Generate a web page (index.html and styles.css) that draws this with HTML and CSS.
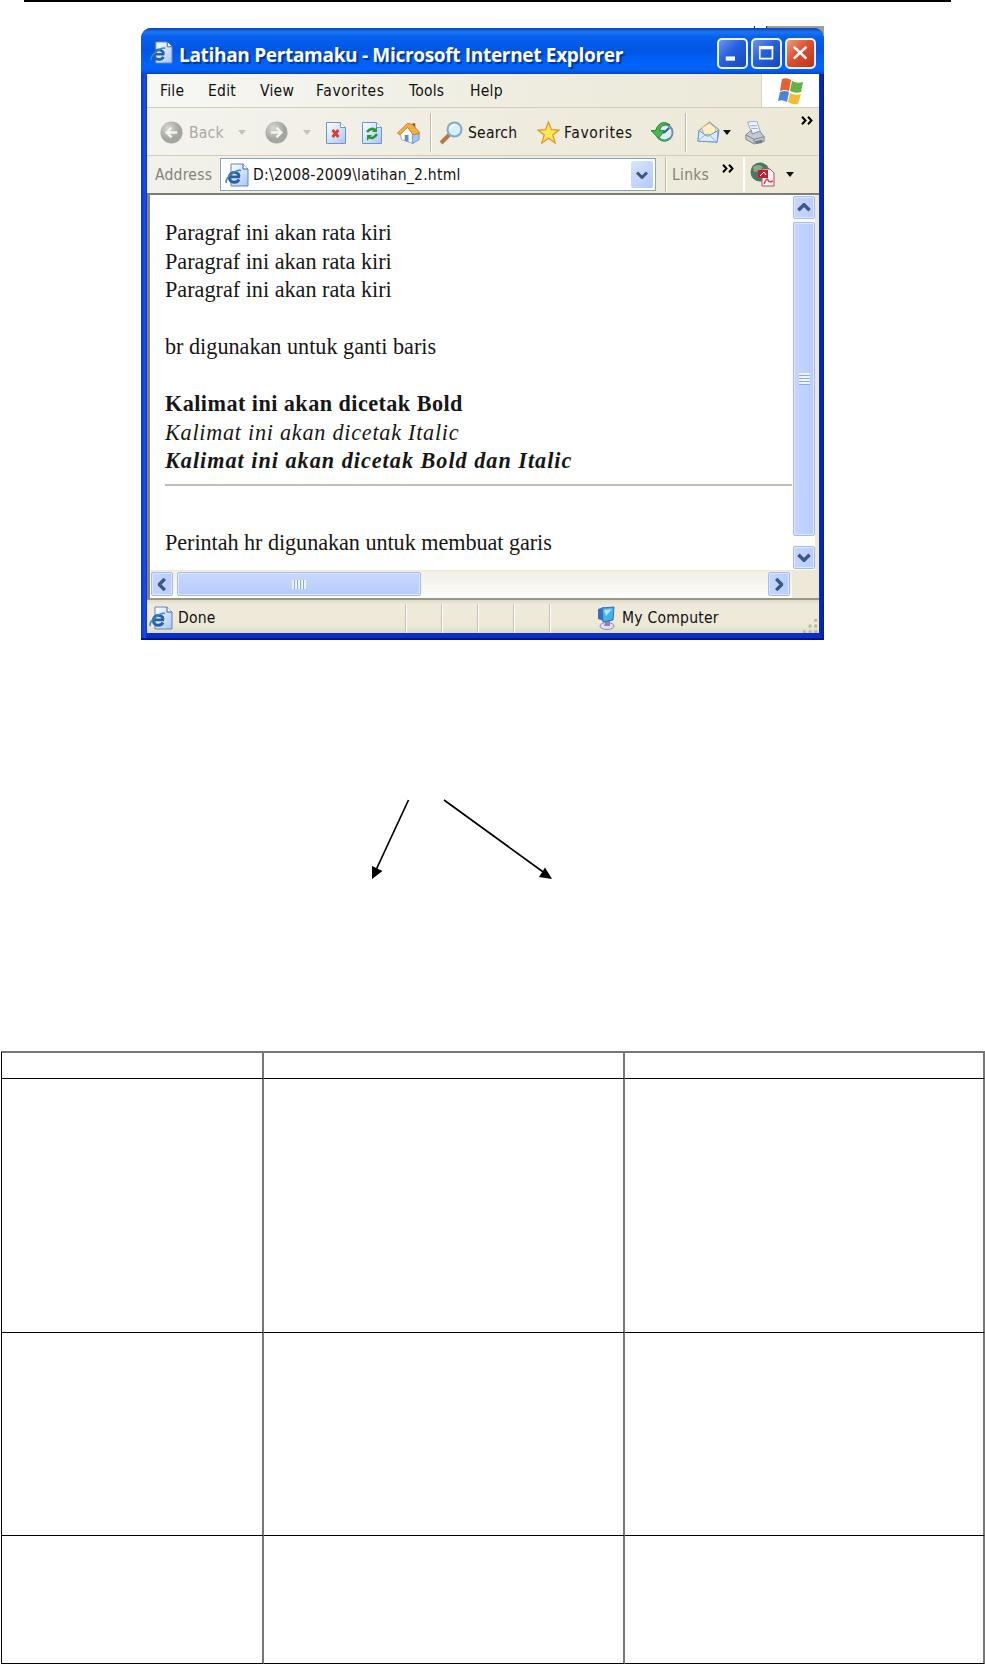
FILE: index.html
```
<!DOCTYPE html>
<html lang="id">
<head>
<meta charset="utf-8">
<title>Latihan Pertamaku</title>
<link rel="stylesheet" href="styles.css">
</head>
<body>
<svg width="0" height="0" class="defs">
  <defs>
    <linearGradient id="sheet" x2="1" y2="1"><stop offset="0" stop-color="#fff"/><stop offset="1" stop-color="#a9c5f5"/></linearGradient>
    <radialGradient id="disc" cx=".35" cy=".3"><stop offset="0" stop-color="#d8d8d2"/><stop offset="1" stop-color="#a6a6a1"/></radialGradient>
    <symbol id="page-e" viewBox="0 0 24 24">
      <path d="M6 1h12l5 5v17H6z" fill="url(#sheet)" stroke="#6384b8"/>
      <path d="M18 1v5h5" fill="#fff" stroke="#405f96"/>
      <path d="M14 16.500c-2 4-8.500 3.500-9.500-.5C3.500 11 8 8 12 10c1.800 1 2.300 2 1.800 3.800H5" fill="none" stroke="#2660a8" stroke-width="2.800"/>
      <path d="M1.500 20C-1 16 11 6 16 7.500" fill="none" stroke="#3f83c9" stroke-width="1.600"/>
    </symbol>
    <symbol id="chev" viewBox="0 0 12 8"><path d="M1 1.500l5 5 5-5" fill="none" stroke="#3d567f" stroke-width="3"/></symbol>
    <symbol id="more" viewBox="0 0 12 9"><path d="M1 .8l3.500 3.700L1 8.200M7 .8l3.500 3.700L7 8.200" fill="none" stroke="#000" stroke-width="2"/></symbol>
    <symbol id="caret" viewBox="0 0 8 5"><path d="M0 0h8L4 5z" fill="currentColor"/></symbol>
  </defs>
</svg>
<div class="head-rule"></div>
<div class="backdrop"><i></i><i></i><b></b></div>
<main class="window">
  <header class="title">
    <svg class="t-icon" viewBox="0 0 24 24"><use href="#page-e"/></svg>
    <h1>Latihan Pertamaku - Microsoft Internet Explorer</h1>
    <div class="controls">
      <span class="ctl"><svg viewBox="0 0 32 32"><path d="M8 22h11" stroke="#fff" stroke-width="5"/></svg></span>
      <span class="ctl"><svg viewBox="0 0 32 32"><path d="M8 9h15v13H8z" fill="none" stroke="#fff" stroke-width="2"/><path d="M7 9h17" stroke="#fff" stroke-width="4"/></svg></span>
      <span class="ctl close"><svg viewBox="0 0 32 32"><path d="M8 8l15 14M23 8L8 22" stroke="#fff" stroke-width="3"/></svg></span>
    </div>
  </header>
  <nav class="menu">
    <span>File</span><span>Edit</span><span>View</span><span class="fav">Favorites</span><span>Tools</span><span>Help</span>
    <div class="flag"><svg viewBox="0 0 28 28">
      <path d="M5 2q5-2 9 1l-2 11q-5-2-9 0z" fill="#e4602e"/><path d="M15 4q5 3 11 1l-2 10q-5 2-11-1z" fill="#62b345"/>
      <path d="M3 15q5-2 9 0l-2 10q-5-3-9-1z" fill="#4a86d6"/><path d="M13 16q5 3 11 1l-3 10q-5 1-10-2z" fill="#f2bd35"/></svg></div>
  </nav>
  <div class="tools">
    <svg class="disc" viewBox="0 0 24 24"><circle cx="12" cy="12" r="11.500" fill="url(#disc)"/><path d="M18 12H7m5-5l-5 5 5 5" fill="none" stroke="#f5f4ee" stroke-width="2.600"/></svg>
    <span class="dim">Back</span>
    <svg class="caret dim"><use href="#caret"/></svg>
    <svg class="disc" viewBox="0 0 24 24"><circle cx="12" cy="12" r="11.500" fill="url(#disc)"/><path d="M6 12h11m-5-5l5 5-5 5" fill="none" stroke="#f5f4ee" stroke-width="2.600"/></svg>
    <svg class="caret dim"><use href="#caret"/></svg>
    <svg class="sheet" viewBox="0 0 20 22"><path d="M.5.500h14l5 5v16H.5z" fill="url(#sheet)" stroke="#6e94d0"/><path d="M14.500.500v5h5" fill="#fff" stroke="#6e94d0"/><path d="M6.500 8l6 7M12.500 8l-6 7" stroke="#e0392a" stroke-width="2.700"/></svg>
    <svg class="sheet" viewBox="0 0 20 22"><path d="M.5.500h14l5 5v16H.5z" fill="url(#sheet)" stroke="#6e94d0"/><path d="M14.500.500v5h5" fill="#fff" stroke="#6e94d0"/><path d="M5 10q4-5 8-2M15 12q-4 6-8 3" fill="none" stroke="#229a35" stroke-width="2.500"/><path d="M10 10h5V5zM10 13H5v6z" fill="#229a35"/></svg>
    <svg class="home" viewBox="0 0 25 24"><path d="M16 2h3v6h-3z" fill="#7a4a34"/><path d="M3 13l8-9 6 8v11L5 19z" fill="#fffdf5" stroke="#8fa5cc"/><path d="M16 12l7 1v6l-7 4z" fill="#a6c4f3" stroke="#7596cc"/><path d="M.5 12L11 2l5 1 8 9-7 2-6-8-8 8z" fill="#f5ae42" stroke="#c67c26"/><path d="M8 14h4v7l-4-1z" fill="#5b8ed9"/></svg>
    <i class="sep"></i>
    <svg class="glass" viewBox="0 0 24 24"><path d="M10 14L2 22" stroke="#b37a48" stroke-width="4"/><circle cx="15.500" cy="8.500" r="7" fill="#d4f0fc" stroke="#83a8d2" stroke-width="2"/><path d="M11 8q1-4 5-4" fill="none" stroke="#fff" stroke-width="2"/></svg>
    <span class="search">Search</span>
    <svg class="star" viewBox="0 0 24 24"><path d="M12 1l3 8 8 .5-6.500 5L19 23l-7-5-7 5 2.500-8.500L1 9.500 9 9z" fill="#ffe552" stroke="#d89a2e" stroke-width="1.300"/></svg>
    <span class="fav">Favorites</span>
    <svg class="hist" viewBox="0 0 24 24"><circle cx="14" cy="12" r="8.500" fill="#d9edf6" stroke="#718aa6" stroke-width="2"/><path d="M14 12l5-5M14 12h-4" stroke="#315d91" stroke-width="2"/><path d="M20 4Q11-2 6 7l-1 3H0l8 8 6-8H9q1-7 11-6z" fill="#4fb64d" stroke="#23823a"/><path d="M8 18q6 5 12 0" fill="none" stroke="#469d57" stroke-width="2"/></svg>
    <i class="sep"></i>
    <svg class="mail" viewBox="0 0 24 24"><path d="M2 10L13 1l10 8-2 13L1 21z" fill="#cce4fa" stroke="#6594ca"/><path d="M5 7l8-5 7 6-2 6H7z" fill="#fff0c4" stroke="#e2a458"/><path d="M2 10l9 6 11-6-1 12L1 21z" fill="#d9edff" stroke="#6594ca"/><path d="M1 21l8-7 4 1 8 7" fill="none" stroke="#8db3dd"/></svg>
    <svg class="caret"><use href="#caret"/></svg>
    <svg class="printer" viewBox="0 0 24 26"><path d="M4 1l10-1 4 12-9 3z" fill="#edf4ff" stroke="#91a3c4"/><path d="M7 5h7M8 8h7" stroke="#91a3c4"/><path d="M2 15l6-5 1 4 8-3 5 6v5l-11 3-9-5z" fill="#c3c8d2" stroke="#7e8694"/><path d="M2 15l9 5 11-3M11 20v4" fill="none" stroke="#777f8e"/><path d="M12 22l8-2v4l-7 1z" fill="#777e88"/></svg>
    <svg class="more"><use href="#more"/></svg>
  </div>
  <div class="address">
    <span class="a-label">Address</span>
    <div class="field">
      <svg class="a-icon"><use href="#page-e"/></svg>
      <span>D:\2008-2009\latihan_2.html</span>
      <b class="drop"><svg width="12" height="8"><use href="#chev"/></svg></b>
    </div>
    <i class="sep"></i>
    <span class="links">Links</span>
    <svg class="more"><use href="#more"/></svg>
    <i class="sep light"></i>
    <svg class="globe" viewBox="0 0 25 25"><circle cx="10" cy="10" r="9.500" fill="#4e7464"/><path d="M3 5q5-4 10 0l-3 4-6 1zM11 10l7-2-3 7z" fill="#8faa87"/><path d="M12 7h8l4 4v13H12z" fill="#fbf2f4" stroke="#b14b60"/><path d="M8 8h10v8H8z" fill="#bd2033"/><path d="M14 22q3-7 4-4t5 1" fill="none" stroke="#c94558" stroke-width="1.500"/><path d="M10 14l4-4 2 3" fill="none" stroke="#fff"/></svg>
    <svg class="caret"><use href="#caret"/></svg>
  </div>
  <section class="view">
    <article class="doc">
      <p>Paragraf ini akan rata kiri</p>
      <p>Paragraf ini akan rata kiri</p>
      <p>Paragraf ini akan rata kiri</p>
      <p class="gap">br digunakan untuk ganti baris</p>
      <p class="gap bold">Kalimat ini akan dicetak Bold</p>
      <p class="ital">Kalimat ini akan dicetak Italic</p>
      <p class="bi">Kalimat ini akan dicetak Bold dan Italic</p>
      <hr>
      <p class="last">Perintah hr digunakan untuk membuat garis</p>
    </article>
    <div class="vbar">
      <b class="btn"><svg class="up" width="14" height="9"><use href="#chev"/></svg></b>
      <b class="thumb"><i class="grip"></i></b>
      <b class="btn"><svg width="14" height="9"><use href="#chev"/></svg></b>
    </div>
    <div class="hbar">
      <b class="btn"><svg class="left" width="14" height="9"><use href="#chev"/></svg></b>
      <b class="thumb"><i class="grip"></i></b>
      <b class="btn end"><svg class="right" width="14" height="9"><use href="#chev"/></svg></b>
    </div>
    <div class="corner"></div>
  </section>
  <footer class="status">
    <div class="done"><svg class="a-icon"><use href="#page-e"/></svg><span>Done</span></div>
    <i></i><i></i><i></i><i></i><i></i>
    <div class="zone"><svg viewBox="0 0 18 24" width="18" height="24"><ellipse cx="10" cy="20" rx="7" ry="3.500" fill="#e6dff2" stroke="#9b83b8"/><path d="M9 14h4v6H7z" fill="#8b84bd"/><path d="M1 3l6-2v14l-6-2z" fill="#3870b8"/><path d="M5 2l12-1-1 13-10 2z" fill="#44b4ea" stroke="#346fae"/><path d="M7 4l8-1-6 7z" fill="#a4e8fc"/></svg><span>My Computer</span></div>
    <svg class="resize" viewBox="0 0 16 16"><path d="M12 1h3v3h-3zM12 7h3v3h-3zM12 13h3v3h-3zM6 7h3v3H6zM6 13h3v3H6zM0 13h3v3H0z" fill="#bdb69f"/></svg>
  </footer>
</main>
<svg class="arrows" width="220" height="120" viewBox="0 0 220 120">
  <path d="M58.500 20L26 90M94 20l102 74" stroke="#000" stroke-width="1.700"/>
  <path d="M22 99V86l10.500 5zM202 99l-13-2 6-9.500z"/>
</svg>
<div class="grid">
  <div></div><div></div><div></div>
  <div></div><div></div><div></div>
  <div></div><div></div><div></div>
  <div></div><div></div><div></div>
</div>
</body>
</html>
```
FILE: styles.css
```
* { box-sizing: border-box; }
body { margin: 0; width: 985px; height: 1664px; background: #fff; overflow: hidden; display: flex; flex-direction: column; }
.defs { position: absolute; }
svg { display: block; flex: none; }
p, h1 { margin: 0; white-space: nowrap; }
span { white-space: nowrap; }
.head-rule { flex: none; margin-left: 24px; width: 927px; height: 2px; background: #000; }
.backdrop { flex: none; height: 8px; margin: 24px 0 -6px 754px; width: 70px; display: flex; gap: 11px; }
.backdrop i { width: 1px; background: #222; }
.backdrop b { flex: 1; background: #a39d94; margin-left: -11px; }

.window { flex: none; position: relative; margin-left: 141px; width: 683px; height: 612px; display: flex; flex-direction: column; padding: 0 4px 5px 6px; background: linear-gradient(90deg, #0831d9, #1b50e4 4px, #0a2fc5 6px, #0a2fc5 678px, #001ea0); border-bottom: 2px solid #00138c; border-radius: 10px 10px 0 0; font: 15.500px "DejaVu Sans Condensed", "DejaVu Sans", sans-serif; font-stretch: condensed; letter-spacing: .25px; color: #111; }
.title { flex: none; height: 46px; margin: 0 -4px 0 -6px; padding: 8px 8px 0 9px; display: flex; align-items: center; border-radius: 10px 10px 0 0; background: linear-gradient(#0743b5, #1974f5 4px, #0860ee 9px, #0055e5 22px, #0263fa 36px, #0261f5 42px, #0646bd); }
.t-icon { width: 23px; height: 23px; margin-right: 6px; margin-top: -6px; }
.title h1 { font: bold 19px "Open Sans", sans-serif; letter-spacing: -.31px; color: #fff; text-shadow: 2px 2px 1px #06368f; margin-top: -1px; }
.controls { margin-left: auto; display: flex; gap: 3px; margin-top: -3px; }
.ctl { width: 31px; height: 31px; border: 2px solid #eef4ff; border-radius: 5px; background: linear-gradient(135deg, #6d94f0, #2460de 45%, #1549bd); }
.ctl svg { width: 27px; height: 27px; }
.close { background: linear-gradient(135deg, #f09a7d, #dd5030 45%, #b8351a); }

.menu { flex: none; height: 34px; margin-right: 1px; background: linear-gradient(90deg, #f7f7f5, #eeecdf 60%, #ece9d8); border-bottom: 1px solid #d2cdbb; display: grid; grid-template-columns: 48px 52px 56px 93px 61px 1fr 58px; padding-left: 13px; align-items: center; }
.fav { letter-spacing: .65px; }
.flag { height: 33px; background: #fff; display: grid; place-items: center; border-left: 1px solid #d8d4c3; }
.flag svg { width: 28px; height: 28px; }

.tools { flex: none; height: 48px; margin-right: 1px; background: linear-gradient(90deg, #f4f3ee, #efecdf 55%, #ece9d8); border-bottom: 1px solid #d2cdbb; display: grid; align-items: center; padding: 2px 0 0 13px; grid-template-columns: 29px 49px 27px 38px 23px 36px 35px 33px 9px 29px 69px 27px 87px 34px 12px 26px 21px 57px 14px; }
.disc { width: 23px; height: 23px; }
.dim { color: #aaa9a3; }
.caret { width: 8px; height: 5px; }
.tools .dim.caret { color: #c4c2b9; }
.sheet { width: 20px; height: 22px; }
.home, .glass { width: 24px; height: 24px; }
.star, .hist, .mail { width: 23px; height: 23px; }
.printer { width: 22px; height: 24px; }
.more { width: 12px; height: 9px; margin-bottom: 25px; }
.sep { width: 1px; height: 39px; background: #bdb9aa; box-shadow: 1px 0 #fff; }

.address { flex: none; height: 39px; margin-right: 1px; background: linear-gradient(90deg, #f2f1ea, #ece9d8); display: grid; align-items: center; padding-left: 8px; grid-template-columns: 65px 436px 9px 8px 48px 23px 6px 37px 10px; border-bottom: 2px solid #7e7c74; }
.a-label, .links { color: #85837a; }
.field { height: 33px; background: #fff; border: 1px solid #8ba4bd; display: flex; align-items: center; padding: 0 2px 0 4px; }
.a-icon { width: 24px; height: 24px; margin-right: 4px; }
.field .drop { margin-left: auto; width: 22px; height: 27px; display: grid; place-items: center; background: linear-gradient(135deg, #d8e4ff, #b3c9f8); border-radius: 2px; }
.address .sep { grid-column: 3; height: 35px; margin-left: 9px; }
.address .links { grid-column: 4 / 6; margin-left: 7px; }
.address .more { grid-column: 6; margin: 0 0 13px 1px; }
.address .light { grid-column: 7; margin-left: -1px; background: #fff; }
.globe { width: 25px; height: 25px; }
.address .caret { margin-left: -1px; }

.view { flex: none; height: 405px; margin-right: 1px; display: grid; grid-template: 375px 28px / 642px 27px; background: #fff; border-left: 3px solid #85837c; border-bottom: 2px solid #9a978a; }
.doc { padding: 24px 0 0 15px; font: 22.200px/28.500px "Liberation Serif", serif; letter-spacing: 0; color: #161616; overflow: hidden; }
.gap { padding-top: 28.500px; }
.bold, .bi { font-weight: bold; }
.ital, .bi { font-style: italic; }
.bold { letter-spacing: .45px; }
.ital { letter-spacing: .75px; }
.bi { letter-spacing: 1px; }
.doc hr { margin: 8px 0 0; border: 0; height: 2px; background: #c0bdb2; }
.last { padding-top: 43px; letter-spacing: -.05px; }
.vbar { border-right: 4px solid #ece9d8; padding: 1px 0 1px 1px; display: flex; flex-direction: column; background: #fcfcf8; }
.btn, .thumb { flex: none; display: grid; place-items: center; background: linear-gradient(90deg, #c4d6ff, #bacdfb); border: 1px solid #a5bbe8; border-radius: 2px; box-shadow: inset 0 0 0 1px #dce7ff; }
.vbar .btn { width: 22px; height: 23px; }
.vbar .thumb { width: 22px; height: 314px; margin: 3px 0 10px; }
.vbar .grip { width: 11px; height: 12px; background: repeating-linear-gradient(#eef4ff 0 2px, #8da9df 2px 3px); }
.hbar { border-top: 1px solid #ece9d8; padding: 1px 2px 0 1px; display: flex; background: linear-gradient(#f1efe6, #fdfdfa); }
.hbar .btn { width: 22px; height: 24px; }
.hbar .thumb { width: 244px; height: 24px; margin-left: 4px; background: linear-gradient(#c8d8ff, #b7ccfb); }
.hbar .grip { width: 14px; height: 9px; background: repeating-linear-gradient(90deg, #eef4ff 0 2px, #8da9df 2px 3px); }
.hbar .end { margin-left: auto; }
.corner { background: #ece9d8; }
.up { transform: rotate(180deg); }
.left { transform: rotate(90deg); }
.right { transform: rotate(-90deg); }

.status { flex: 1; margin-right: 1px; padding-top: 3px; background: linear-gradient(#e0dccb, #eeebdc 5px, #ece9d8 26px, #dedac8); display: grid; grid-template-columns: 258px repeat(5, 36px) 1fr 16px; align-items: center; }
.status i { height: 29px; border-left: 1px solid #c6c2b1; box-shadow: inset 1px 0 #fff; }
.done, .zone { display: flex; align-items: center; }
.done { padding-left: 2px; }
.done .a-icon { margin-right: 5px; }
.zone { height: 29px; padding-left: 12px; gap: 7px; }
.resize { width: 15px; height: 15px; align-self: end; }

.arrows { margin: 140px 0 0 350px; }
.grid { flex: none; margin: 151px 0 0 1px; width: 984px; height: 613px; display: grid; grid-template: 26px 254px 203px 128px / 262px 361px 360px; border: solid #000; border-width: 2px 0 0 1px; border-top-color: #777; }
.grid div { border-right: 2px solid #777; border-bottom: 1px solid #000; }
```
